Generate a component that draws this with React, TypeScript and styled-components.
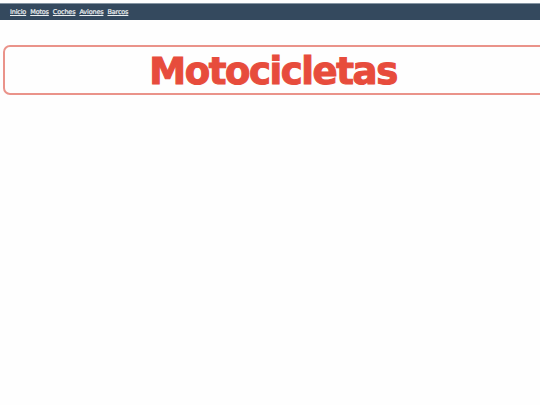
import React from 'react';
import styled, { createGlobalStyle } from 'styled-components';

const GlobalStyle = createGlobalStyle`
  html, body {
    margin: 0;
    padding: 0;
    background: #fefefe;
    overflow: hidden;
  }
  body {
    width: 540px;
    height: 405px;
    font-family: "DejaVu Sans", sans-serif;
  }
`;

const Page = styled.div`
  width: 540px;
  height: 405px;
  padding-top: 3px;
  box-sizing: border-box;
  overflow: hidden;
`;

const NavBar = styled.nav`
  display: flex;
  align-items: center;
  gap: 4px;
  height: 17px;
  padding-left: 10px;
  box-sizing: border-box;
  background: #34495e;
  border-top: 1px solid #8595a3;
`;

const NavLink = styled.a`
  font-family: "DejaVu Sans", sans-serif;
  font-size: 6.5px;
  font-weight: 400;
  letter-spacing: -0.17px;
  -webkit-text-stroke: 0.2px #ecf0f1;
  color: #ecf0f1;
  text-decoration: underline;
  white-space: nowrap;
`;

const TitleBox = styled.div`
  display: flex;
  align-items: center;
  justify-content: center;
  width: 560px;
  height: 50px;
  margin: 25px 0 0 3px;
  box-sizing: border-box;
  padding: 2px 20px 0 0;
  border: 2px solid #ea938a;
  border-radius: 7px;
`;

const Title = styled.h1`
  margin: 0;
  font-family: "DejaVu Sans", sans-serif;
  font-size: 37px;
  font-weight: 700;
  line-height: 1;
  letter-spacing: -1.4px;
  color: #e74c3c;
  -webkit-text-stroke: 1.1px #e74c3c;
`;

const links = ['Inicio', 'Motos', 'Coches', 'Aviones', 'Barcos'];

const App: React.FunctionComponent = () => (
  <Page>
    <GlobalStyle />
    <NavBar>
      {links.map((link) => (
        <NavLink key={link} href="#">{link}</NavLink>
      ))}
    </NavBar>
    <TitleBox>
      <Title>Motocicletas</Title>
    </TitleBox>
  </Page>
);

export default App;
